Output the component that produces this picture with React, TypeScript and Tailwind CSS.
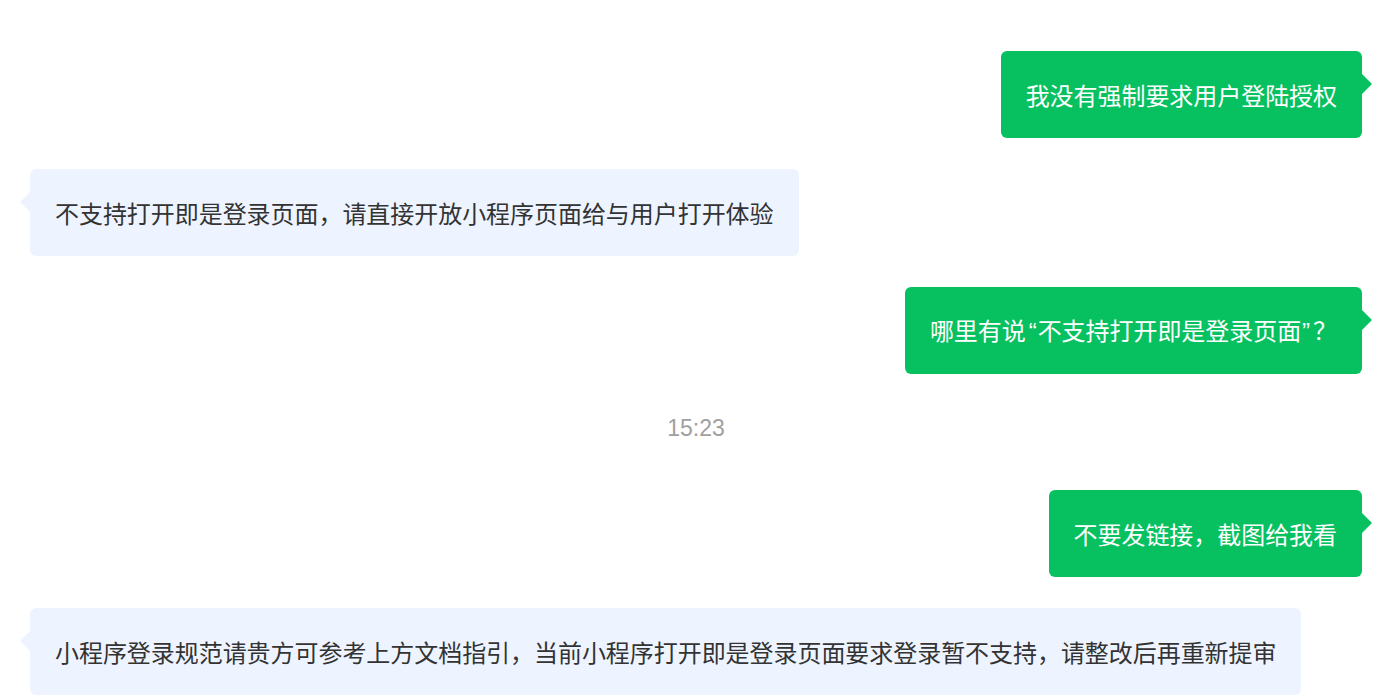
import { FC, ReactNode } from "react";

interface IMsg {
  children: ReactNode;
  mine?: boolean;
}

const Bubble: FC<IMsg> = ({ children, mine }) => {
  if (mine) {
    return (
      <div className="flex justify-end pr-[16px]">
        <div className="relative flex h-[87px] items-center rounded-[6px] bg-[#07c160] px-[25px] text-[24px] leading-[35px] tracking-[-0.05px] text-white">
          {children}
          <span className="absolute left-full top-[23px] h-0 w-0 border-y-[10px] border-l-[10px] border-y-transparent border-l-[#07c160]" />
        </div>
      </div>
    );
  }
  return (
    <div className="flex justify-start pl-[30px]">
      <div className="relative flex h-[87px] items-center rounded-[6px] bg-[#eef4ff] px-[25px] text-[24px] leading-[35px] tracking-[-0.05px] text-[#333333]">
        {children}
        <span className="absolute right-full top-[23px] h-0 w-0 border-y-[10px] border-r-[10px] border-y-transparent border-r-[#eef4ff]" />
      </div>
    </div>
  );
};

const Quote: FC<{ c: string; left?: boolean }> = ({ c, left }) => (
  <span
    className={left ? "pl-[3px] pr-[1px]" : "pl-[1px] pr-[3px]"}
    style={{ fontFamily: '"Liberation Sans", sans-serif' }}
  >
    {c}
  </span>
);

export default function App() {
  return (
    <div
      className="min-h-[700px] w-full bg-white pt-[51px]"
      style={{ fontFamily: '"Noto Sans CJK SC", "Noto Sans", sans-serif' }}
    >
      <div className="flex flex-col gap-[31px]">
        <Bubble mine>我没有强制要求用户登陆授权</Bubble>
        <Bubble>不支持打开即是登录页面，请直接开放小程序页面给与用户打开体验</Bubble>
        <Bubble mine>
          <span>
            哪里有说<Quote c="“" left />不支持打开即是登录页面<Quote c="”" />？
          </span>
        </Bubble>
      </div>
      <div
        className="mb-[48px] mt-[40px] pl-[14px] text-center text-[23px] leading-[28px] text-[#a0a0a0]"
        style={{ fontFamily: '"Liberation Sans", sans-serif' }}
      >
        15:23
      </div>
      <div className="flex flex-col gap-[31px]">
        <Bubble mine>不要发链接，截图给我看</Bubble>
        <Bubble>小程序登录规范请贵方可参考上方文档指引，当前小程序打开即是登录页面要求登录暂不支持，请整改后再重新提审</Bubble>
      </div>
    </div>
  );
}
